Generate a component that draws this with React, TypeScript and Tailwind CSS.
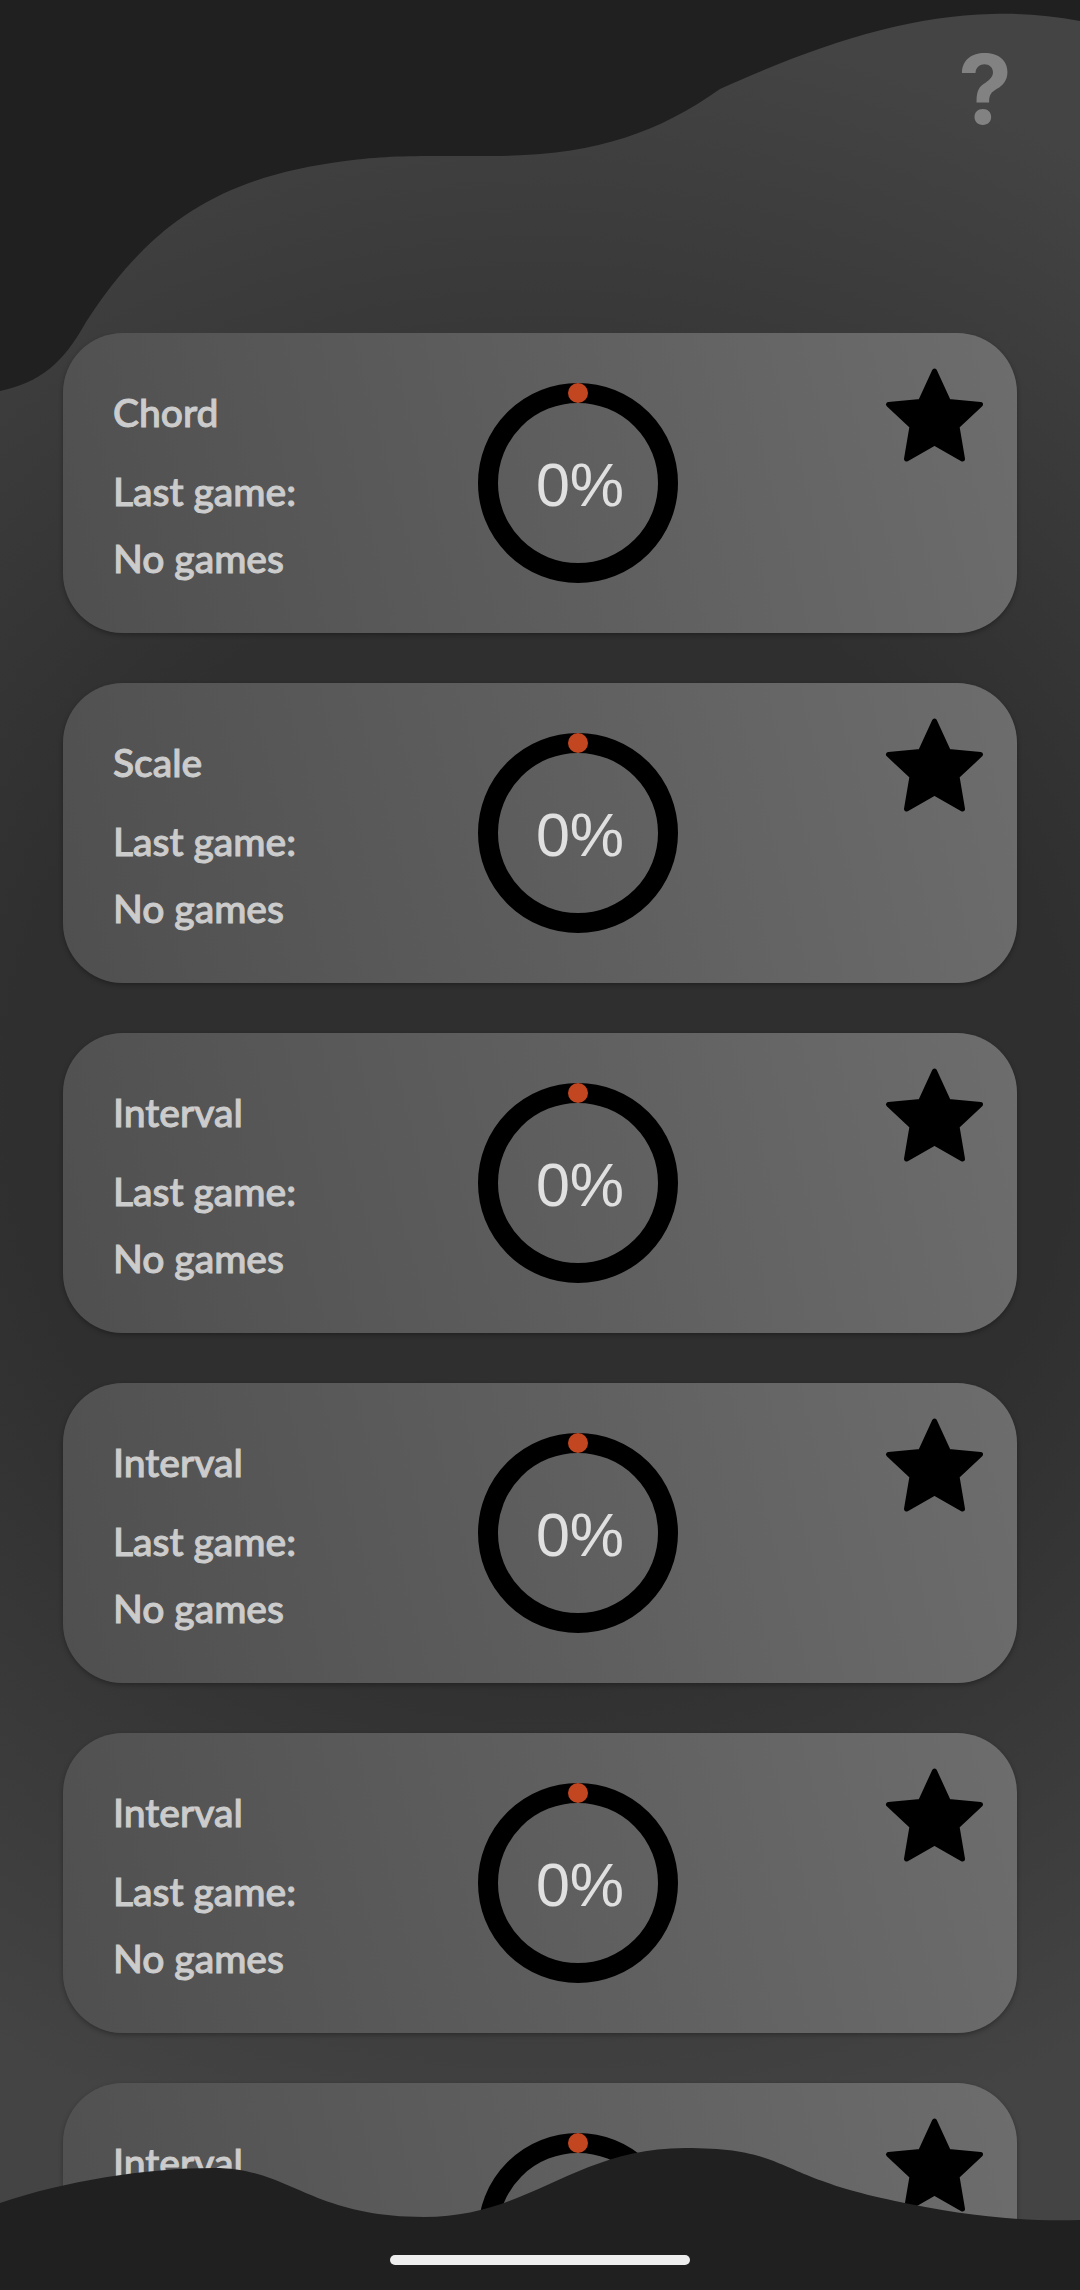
type Game = { id: number; name: string; lastGame: string; percent: number };

const games: Game[] = [
  { id: 1, name: "Chord", lastGame: "No games", percent: 0 },
  { id: 2, name: "Scale", lastGame: "No games", percent: 0 },
  { id: 3, name: "Interval", lastGame: "No games", percent: 0 },
  { id: 4, name: "Interval", lastGame: "No games", percent: 0 },
  { id: 5, name: "Interval", lastGame: "No games", percent: 0 },
  { id: 6, name: "Interval", lastGame: "No games", percent: 0 },
];

function TopWave() {
  return (
    <svg
      className="absolute inset-x-0 top-0 h-[400px] w-full"
      viewBox="0 0 1080 400"
      preserveAspectRatio="none"
      aria-hidden="true"
    >
      <path
        d="M0 0H1080V21C1050 15 1020 13 992 14C906 16 820 44 720 89C655 135 590 156 490 156C415 156 390 155 345 161C230 176 155 215 86 322C62 365 40 382 0 391Z"
        fill="#202020"
      />
    </svg>
  );
}

function BottomWave() {
  return (
    <svg
      className="absolute inset-x-0 bottom-0 h-[150px] w-full"
      viewBox="0 0 1080 150"
      preserveAspectRatio="none"
      aria-hidden="true"
    >
      <path
        d="M0 63C65 41 145 28 214 28C290 28 310 77 424 77C530 77 575 8 685 8C790 8 770 35 895 61C960 75 1020 82 1080 80V150H0Z"
        fill="#202020"
      />
    </svg>
  );
}

function ProgressRing({ percent }: { percent: number }) {
  return (
    <div className="relative flex size-[200px] shrink-0 items-center justify-center">
      <svg className="absolute inset-0 size-full" viewBox="0 0 200 200" aria-hidden="true">
        <circle cx="100" cy="100" r="90" fill="none" stroke="#000" strokeWidth="20" />
        <circle cx="100" cy="10" r="10" fill="#c24620" />
      </svg>
      <span className="relative pt-1 pl-1 font-['Liberation_Sans',sans-serif] text-[61px] leading-none text-[#e0e0e0]">
        {percent}%
      </span>
    </div>
  );
}

function StarIcon() {
  return (
    <svg className="h-[98px] w-[104px]" viewBox="24 36 104 98" aria-hidden="true">
      <path
        d="M75.5 41L89.5 71.5L121.5 74.5L98 96.5L103.5 129L75.5 113L47.5 129L53 96.5L29.5 74.5L61.5 71.5Z"
        fill="#000"
        stroke="#000"
        strokeWidth="5"
        strokeLinejoin="round"
      />
    </svg>
  );
}

function GameCard({ game }: { game: Game }) {
  return (
    <li className="flex h-[300px] shrink-0 items-center rounded-[60px] bg-linear-75 from-[#4f4f4f] to-[#6d6d6d] pr-[30px] pl-[50px] shadow-[0_2px_5px_rgba(0,0,0,0.3)]">
      <div className="w-[365px] shrink-0 pt-1 text-[39px] font-medium text-[#cccccc] [-webkit-text-stroke:1px_#cccccc]">
        <h2 className="mb-3 leading-[67px]">{game.name}</h2>
        <p className="leading-[67px]">Last game:</p>
        <p className="leading-[67px]">{game.lastGame}</p>
      </div>
      <ProgressRing percent={game.percent} />
      <button type="button" aria-label={`Favourite ${game.name}`} className="mt-[33px] ml-auto cursor-pointer self-start">
        <StarIcon />
      </button>
    </li>
  );
}

export default function App() {
  return (
    <main className="relative flex h-screen flex-col overflow-hidden bg-[radial-gradient(circle_at_50%_48%,#2f2f2f_0px,#2f2f2f_530px,#444444_1090px)] font-['Lato',sans-serif]">
      <TopWave />
      <header className="relative flex h-[333px] shrink-0 items-start justify-end px-[68px] pt-[39px]">
        <button
          type="button"
          aria-label="Help"
          className="cursor-pointer font-['Inter',sans-serif] text-[96px] leading-[100px] font-bold text-[#828282]"
        >
          ?
        </button>
      </header>
      <ul className="relative flex min-h-0 flex-1 flex-col gap-[50px] overflow-y-auto px-[63px] pb-[150px] [scrollbar-width:none]">
        {games.map((game) => (
          <GameCard key={game.id} game={game} />
        ))}
      </ul>
      <footer className="absolute inset-x-0 bottom-0 flex h-[150px] items-end justify-center pb-[25px]">
        <BottomWave />
        <div className="relative h-[10px] w-[300px] rounded-full bg-[#eeeeee]" />
      </footer>
    </main>
  );
}
